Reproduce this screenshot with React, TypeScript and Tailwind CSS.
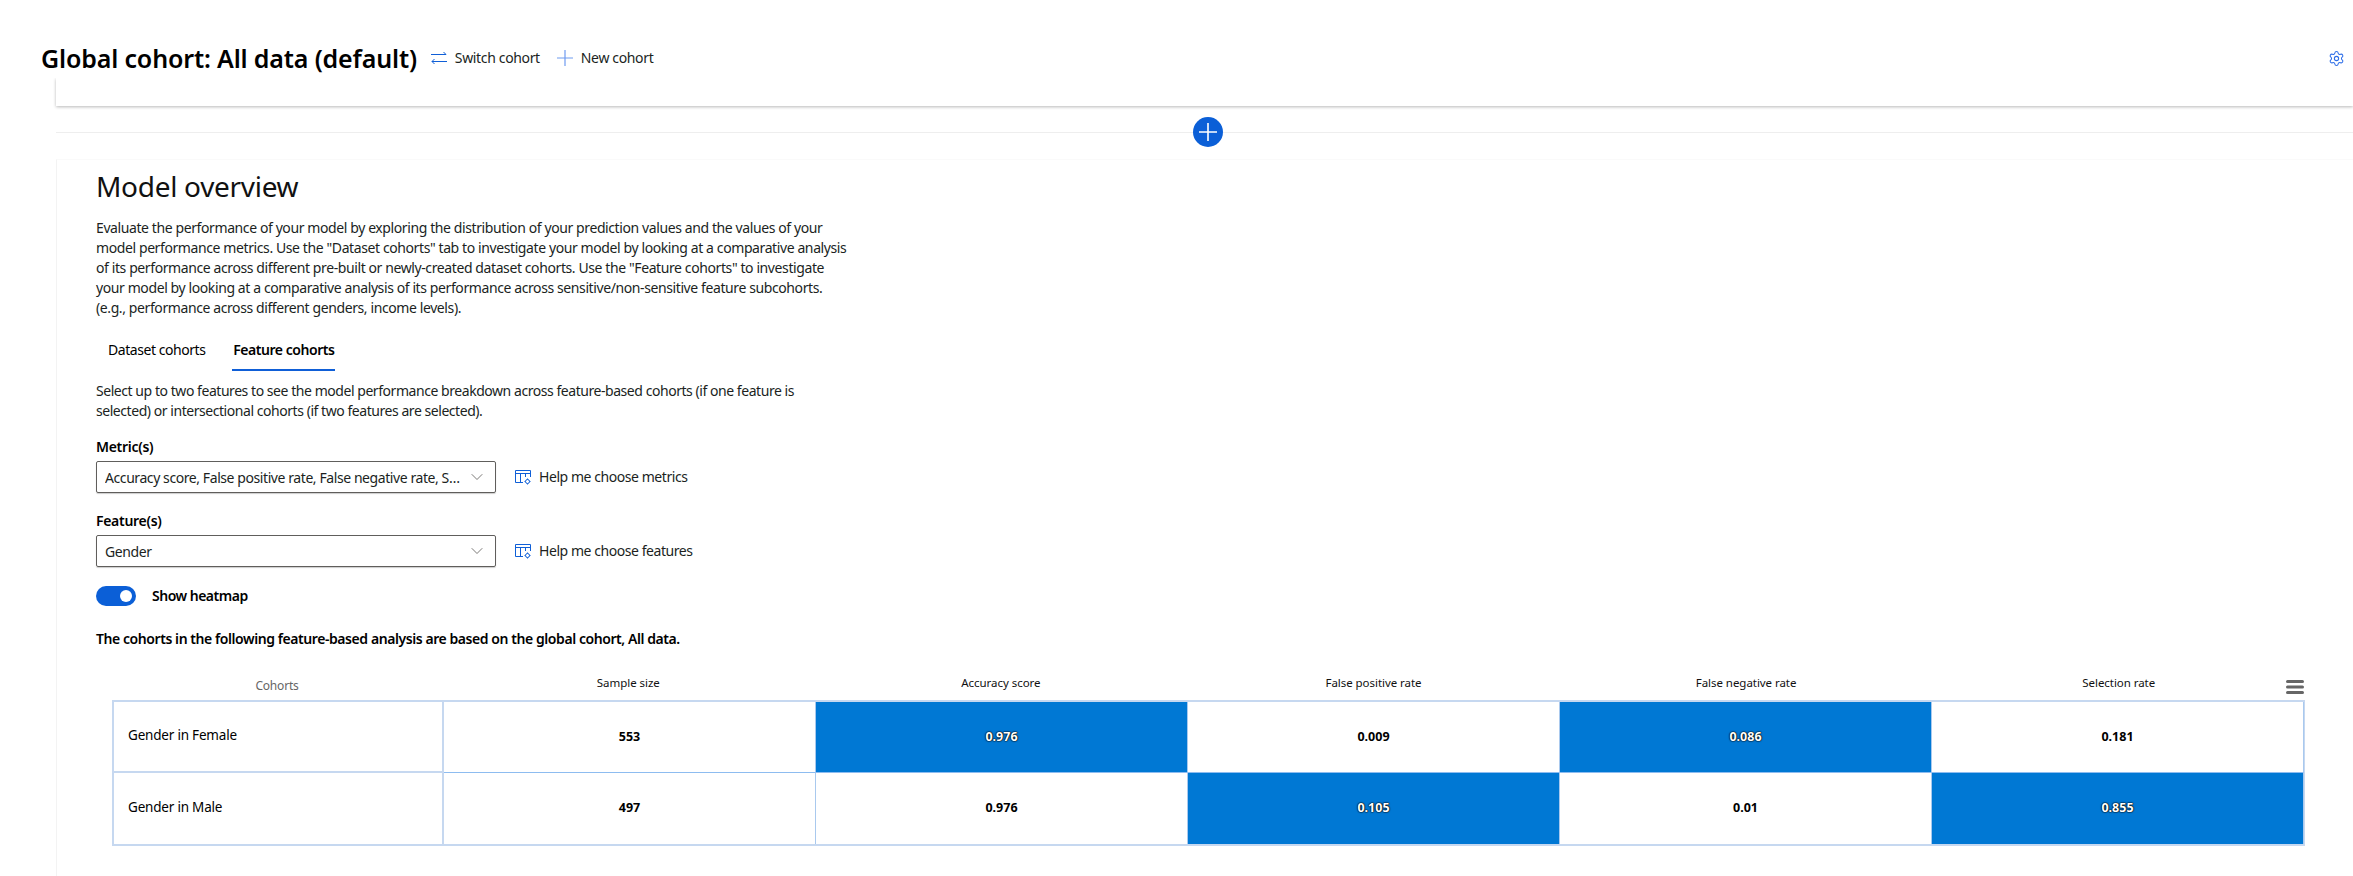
import { ChevronDown, Settings } from 'lucide-react';

const font = "font-['Noto_Sans','Liberation_Sans',sans-serif]";

type CellType = {
  value: string;
  hot?: boolean;
};

const rows: { name: string; cells: CellType[] }[] = [
  {
    name: 'Gender in Female',
    cells: [
      { value: '553' },
      { value: '0.976', hot: true },
      { value: '0.009' },
      { value: '0.086', hot: true },
      { value: '0.181' },
    ],
  },
  {
    name: 'Gender in Male',
    cells: [
      { value: '497' },
      { value: '0.976' },
      { value: '0.105', hot: true },
      { value: '0.01' },
      { value: '0.855', hot: true },
    ],
  },
];

const headers = [
  'Sample size',
  'Accuracy score',
  'False positive rate',
  'False negative rate',
  'Selection rate',
];

const SwitchIcon = () => (
  <svg width="16" height="16" viewBox="0 0 16 16" fill="none" stroke="#0f5fd7" strokeWidth="1">
    <path d="M0 4.5h15M12.5 2l2.5 2.5M1 11.5h15M3.5 9L1 11.5 3.5 14" />
  </svg>
);

const TableGearIcon = () => (
  <svg width="16" height="16" viewBox="0 0 16 16" fill="none" stroke="#0f5fd7" strokeWidth="1">
    <path d="M8 13.5H.5v-12h15V8M.5 4.5h15M5.5 4.5v9M10.5 4.5V8" />
    <circle cx="12.5" cy="12.5" r="2" />
    <path d="M12.5 9.5v1M12.5 14.5v1M9.5 12.5h1M14.5 12.5h1" />
  </svg>
);

const Dropdown = ({ label, value, help }: { label: string; value: string; help: string }) => (
  <div className="flex flex-col">
    <div className="text-sm leading-5 font-semibold tracking-[-0.3px] text-black h-5">{label}</div>
    <div className="flex items-center mt-1">
      <div className="w-[400px] h-8 border border-[#605e5c] rounded-[2px] flex items-center pl-2 pr-2 shadow-[0_1px_1px_rgba(0,0,0,0.2)]">
        <span className="flex-1 truncate text-sm tracking-[-0.42px] text-[#201f1e] pt-[2px]">{value}</span>
        <ChevronDown size={20} strokeWidth={1} className="ml-1 text-[#605e5c]" />
      </div>
      <div className="flex items-center ml-[19px] text-sm tracking-[-0.44px] text-[#201f1e] gap-2">
        <TableGearIcon />
        <span>{help}</span>
      </div>
    </div>
  </div>
);

export default function App() {
  return (
    <div className={`w-[2353px] h-[876px] overflow-hidden bg-white text-black ${font}`}>
      <div className="relative z-10 bg-white h-[78px] pt-[38px] pl-[41px] pr-2 flex items-center">
        <h1 className="text-[25px] leading-8 font-semibold tracking-[-0.15px] whitespace-nowrap">
          Global cohort: All data (default)
        </h1>
        <div className="flex items-center gap-2 ml-[14px] text-sm tracking-[-0.35px] text-[#201f1e]">
          <SwitchIcon />
          <span>Switch cohort</span>
        </div>
        <div className="flex items-center gap-2 ml-[17px] text-sm tracking-[-0.35px] text-[#201f1e]">
          <svg width="16" height="16" viewBox="0 0 16 16" stroke="#6f9bf0" strokeWidth="1.2">
            <path d="M0 8h16M8 0v16" />
          </svg>
          <span>New cohort</span>
        </div>
        <Settings size={17} strokeWidth={1.5} className="ml-auto text-[#2f6fe8]" />
      </div>

      <div className="ml-14 h-7 bg-white shadow-[0_1px_3px_rgba(0,0,0,0.28)]" />

      <div className="relative ml-14 mt-[26px] h-px bg-[#eeeeee]">
        <button className="absolute left-[1137px] -top-[15px] w-[30px] h-[30px] rounded-full bg-[#0b5fd7] flex items-center justify-center">
          <svg width="18" height="18" viewBox="0 0 18 18" stroke="white" strokeWidth="1.6">
            <path d="M0 9h18M9 0v18" />
          </svg>
        </button>
      </div>

      <div className="ml-14 mt-[26px] pl-[39px] pt-2 h-[720px] border-l border-[#f3f3f3] border-t border-t-[#fafafa]">
        <h2 className="text-[28px] leading-9 tracking-[-0.3px] text-[#111]">Model overview</h2>

        <p className="mt-[14px] w-[756px] text-sm leading-5 tracking-[-0.4px] text-[#201f1e]">
          Evaluate the performance of your model by exploring the distribution of your prediction values and the values of your
          model performance metrics. Use the "Dataset cohorts" tab to investigate your model by looking at a comparative analysis
          of its performance across different pre-built or newly-created dataset cohorts. Use the "Feature cohorts" to investigate
          your model by looking at a comparative analysis of its performance across sensitive/non-sensitive feature subcohorts.
          <br />
          (e.g., performance across different genders, income levels).
        </p>

        <div className="flex mt-[19px] text-sm tracking-[-0.45px] h-[34px]">
          <div className="px-3 pt-[3px] whitespace-nowrap">Dataset cohorts</div>
          <div className="ml-[15px] pt-[3px] w-[103px] text-center font-semibold whitespace-nowrap border-b-2 border-[#0f5fd7] h-[34px]">
            Feature cohorts
          </div>
        </div>

        <p className="mt-[10px] w-[760px] text-sm leading-5 tracking-[-0.45px] text-[#201f1e]">
          Select up to two features to see the model performance breakdown across feature-based cohorts (if one feature is
          <br />
          selected) or intersectional cohorts (if two features are selected).
        </p>

        <div className="mt-[16px]">
          <Dropdown
            label="Metric(s)"
            value="Accuracy score, False positive rate, False negative rate, Selection rate"
            help="Help me choose metrics"
          />
        </div>
        <div className="mt-[18px]">
          <Dropdown label="Feature(s)" value="Gender" help="Help me choose features" />
        </div>

        <div className="flex items-center mt-[19px] h-5">
          <div className="w-10 h-5 rounded-full bg-[#0b5fd7] flex items-center justify-end pr-1">
            <div className="w-3 h-3 rounded-full bg-white" />
          </div>
          <span className="ml-4 text-sm font-semibold tracking-[-0.5px]">Show heatmap</span>
        </div>

        <p className="mt-[23px] text-sm leading-5 font-semibold tracking-[-0.43px]">
          The cohorts in the following feature-based analysis are based on the global cohort, All data.
        </p>

        <div className="relative ml-4 mt-[23px] w-[2193px]">
          <svg className="absolute right-[1px] top-[8px]" width="18" height="14" viewBox="0 0 18 14" fill="#666">
            <rect x="0" y="0" width="18" height="3" rx="1.5" />
            <rect x="0" y="5.5" width="18" height="3" rx="1.5" />
            <rect x="0" y="11" width="18" height="3" rx="1.5" />
          </svg>
          <div className="grid grid-cols-[330px_repeat(5,1fr)] h-[28px] text-[11.5px]">
            <div className="text-center text-[12px] text-[#666] pt-[5px] tracking-[-0.2px]">Cohorts</div>
            {headers.map((h) => (
              <div key={h} className="text-center text-[#111] pt-[2px] tracking-[-0.05px]">
                {h}
              </div>
            ))}
          </div>
          <div className="grid grid-cols-[330px_repeat(5,1fr)] border-t-2 border-l-2 border-b-2 border-r border-[#c6d8f0]">
            {rows.map((row, i) => (
              <div key={row.name} className="contents">
                <div
                  className={`h-[71px] flex items-center pl-[14px] pb-[2px] text-[13.5px] tracking-[-0.2px] border-r-2 border-[#c6d8f0] ${
                    i === 0 ? 'border-b-2' : ''
                  }`}
                >
                  {row.name}
                </div>
                {row.cells.map((cell, j) => (
                  <div
                    key={j}
                    className={`h-[71px] flex items-center justify-center text-[12.5px] font-bold border-r border-[#a9c9ee] ${
                      i === 0 ? 'border-b border-b-[#8dbcf0]' : ''
                    } ${
                      cell.hot
                        ? 'bg-[#0078d4] text-white [text-shadow:0_0_2px_#000,0_0_1px_#000,0_0_1px_#000]'
                        : 'bg-white text-black'
                    }`}
                  >
                    {cell.value}
                  </div>
                ))}
              </div>
            ))}
          </div>
        </div>
      </div>
    </div>
  );
}
